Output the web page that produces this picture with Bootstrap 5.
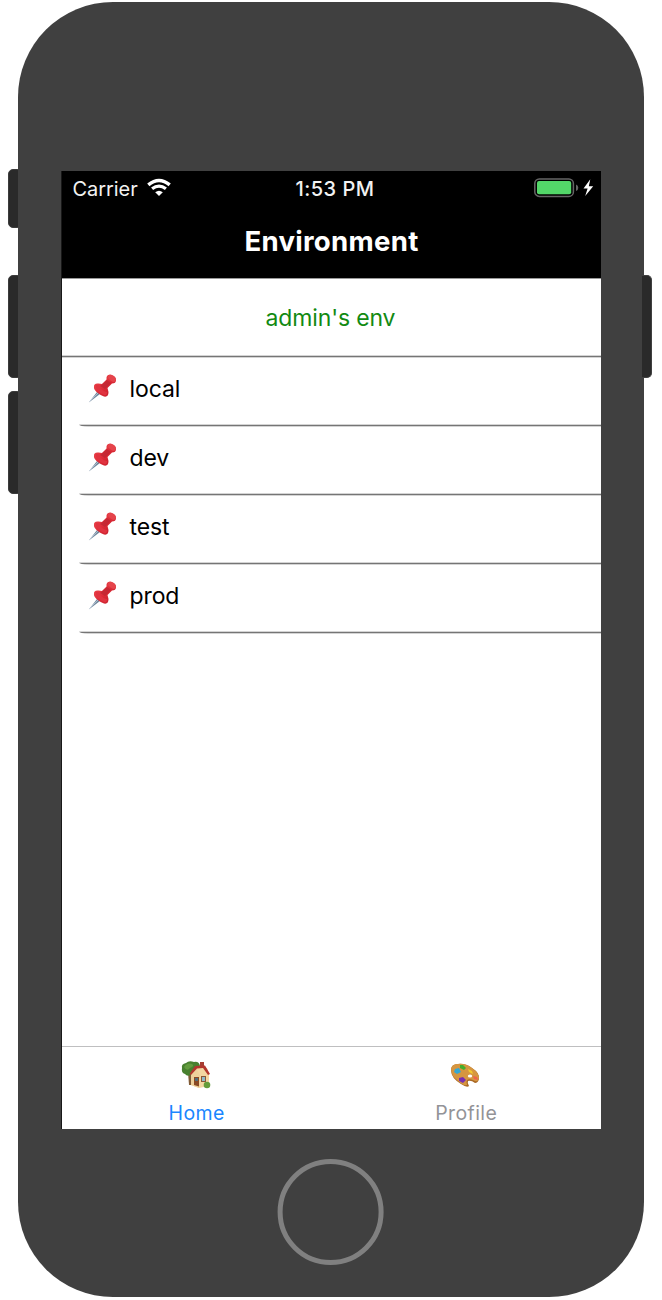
<!DOCTYPE html>
<html lang="en">
<head>
<meta charset="utf-8">
<meta name="viewport" content="width=device-width, initial-scale=1">
<title>Environment</title>
<link href="https://cdn.jsdelivr.net/npm/bootstrap@5.3.0/dist/css/bootstrap.min.css" rel="stylesheet">
<style>
html,body{height:1300px;overflow:hidden;background:#fff}
body{font-family:Inter,"Liberation Sans",sans-serif;color:#000}
.phone{width:626.4px;height:1295px;margin:2.4px 0 0 17.7px;border-radius:95px;background:#404040;padding:168.6px 43px 0 43.3px}
.side-key{width:14px;background:#2a2a2a;border:1.5px solid #3c3c3c;border-radius:5px}
.k1{left:7.5px;top:169px;height:59px}
.k2{left:7.5px;top:275px;height:103px}
.k3{left:7.5px;top:391px;height:103px}
.key-edge{width:10px;left:642px;top:275px;height:103px;background:#2a2a2a;border:1.5px solid #404040;border-left:0;border-radius:0 5px 5px 0}
.screen{width:540px;height:958px;border-left:1px solid #181818}
.top{height:108px;border-bottom:1px solid #999}
.status{height:36px;font-size:20px;line-height:36px;color:#f2f2f2}
.status>div{flex:1 1 0}
.carrier{letter-spacing:-.05px;margin-left:2.5px}
.wifi{margin:0 0 1px 8.5px}
.battery{margin:0 5px 1px 0}
.clock{font-weight:500;letter-spacing:.5px;margin-left:-1px}
.heading{font-size:27.6px;line-height:34px;font-weight:700;margin-top:17px;letter-spacing:.28px}
.ruled{background:linear-gradient(#d4d4d4 1px,#757575 1px 2px,#d4d4d4 2px) bottom/100% 3px no-repeat}
.owner{height:79px;font-size:23px;line-height:79px;color:#128a12;letter-spacing:-.15px;padding-right:2px}
.env{height:69px;margin-left:17px;padding:0 0 6px 9px;border-bottom-left-radius:9px 3px;font-size:23px;line-height:64px}
.env svg{margin:0 12.5px 1px 0}
.env span{letter-spacing:-.1px;margin-top:-1px}
.tabs{height:83px;border-top:1px solid #bfbfc0}
.tab{flex:1 1 0;font-size:19.5px;line-height:24px;letter-spacing:.4px;color:#939397;padding-top:13px}
.tab.on{color:#1a86ff}
.tab span{margin-top:11px}
.tab svg{margin-left:-2px}
.home-key{width:106px;height:106px;border:5px solid #808080;border-radius:50%;margin:30px auto 0;transform:translateX(-.4px)}
</style>
</head>
<body>
<div class="position-absolute side-key k1"></div>
<div class="position-absolute side-key k2"></div>
<div class="position-absolute side-key k3"></div>
<div class="phone position-relative">
 <div class="screen bg-white d-flex flex-column">
  <header class="top bg-black text-white text-center">
   <div class="status d-flex">
    <div class="d-flex align-items-center ps-2 text-start"><span class="carrier">Carrier</span>
     <svg class="wifi" width="26" height="20" viewBox="0 0 26 20" fill="none" stroke="#fff"><path d="M2.300 6.900Q13-1.800 23.700 6.900" stroke-width="3.500"/><path d="M6.100 10.800Q13 5.400 19.900 10.800" stroke-width="3.300"/><path d="M9.200 14.200Q13 11.200 16.800 14.200L13 18Z" fill="#fff" stroke="none"/></svg>
    </div>
    <div class="clock">1:53 PM</div>
    <div class="d-flex align-items-center justify-content-end">
     <svg class="battery" width="62" height="22" viewBox="0 0 62 22"><rect x=".8" y="2" width="38.6" height="17.4" rx="4.5" fill="none" stroke="#656565" stroke-width="1.5"/><rect x="3" y="4.1" width="34.2" height="13.1" rx="2" fill="#53d769"/><path d="M42 7.500Q44.300 8.200 44.300 10.700Q44.300 13.200 42 14Z" fill="#656565"/><path d="M56.300 2.200L49.500 11.600H53.600L51.200 19L59.200 9.200H54.800Z" fill="#fff"/></svg>
    </div>
   </div>
   <h1 class="heading mb-0">Environment</h1>
  </header>
  <main class="flex-grow-1">
   <div class="owner ruled text-center">admin's env</div>
   <div class="env ruled d-flex align-items-center"><svg width="29" height="29"><use href="#pin"/></svg><span>local</span></div>
   <div class="env ruled d-flex align-items-center"><svg width="29" height="29"><use href="#pin"/></svg><span>dev</span></div>
   <div class="env ruled d-flex align-items-center"><svg width="29" height="29"><use href="#pin"/></svg><span>test</span></div>
   <div class="env ruled d-flex align-items-center"><svg width="29" height="29"><use href="#pin"/></svg><span>prod</span></div>
  </main>
  <nav class="tabs d-flex">
   <div class="tab on d-flex flex-column align-items-center">
    <svg width="30" height="30" viewBox="0 0 30 30"><path d="M7 12L10 11L11 25H8Z" fill="#805a35"/><path d="M1 8Q0 4 5 3Q8 0 13 2Q18 1 19 6L18 11L10 15Q6 17 4 14Q0 13 1 8Z" fill="#48802f"/><path d="M3 7Q6 2 11 4Q14 6 9 8Q6 12 3 7" fill="#629b3d"/><path d="M10 14L15 7L26 8L28 15V26L18 28L10 25Z" fill="#f3d7a1"/><path d="M10 15L15 8L19 15L18 28L10 25Z" fill="#eed09a"/><path d="M19 2H23V8H19Z" fill="#a63e32"/><path d="M8.500 14L14 6L24 5.500L29 14L27 15L22 8L16 8.500L10 15Z" fill="#b2362d"/><path d="M13 17H18V26.500L13 25Z" fill="#8a4a24"/><path d="M14 18H17V21H14Z" fill="#536d78"/><path d="M20 16H25V22H20Z" fill="#8b5738"/><path d="M21 17H24V21H21Z" fill="#8dbac9"/><circle cx="26" cy="25" r="3.300" fill="#659c3b"/></svg>
    <span>Home</span>
   </div>
   <div class="tab d-flex flex-column align-items-center">
    <svg width="30" height="30" viewBox="0 0 30 30"><path d="M1 10Q1 4 8 4Q15 3 22 8Q30 13 29 19Q28 23 25 23Q21 20 18 21Q17 23 19 26Q17 28 11 24Q1 18 1 10Z" fill="#aa6926"/><path d="M1 9Q2 4 8 4Q15 3 22 8Q29 13 29 18Q28 22 25 21Q20 18 17 20Q16 22 17 25Q13 26 8 21Q1 16 1 9Z" fill="#d69640"/><ellipse cx="20" cy="16" rx="2.200" ry="1.600" fill="#fff"/><path d="M10 5L13 5L16 8L14 10L10 8Z" fill="#43ad2b"/><path d="M5 9L9 8L11 12L7 14L4 12Z" fill="#35a8d3"/><path d="M9 18L13 17L16 20L13 23L9 21Z" fill="#7830b1"/><path d="M18 9L22 11L23 14L19 12Z" fill="#f3cb2d"/><path d="M23 16L27 17L28 20L24 19Z" fill="#ee614d"/></svg>
    <span>Profile</span>
   </div>
  </nav>
 </div>
 <div class="home-key"></div>
</div>
<div class="position-absolute key-edge"></div>
<svg width="0" height="0" class="position-absolute"><defs>
 <linearGradient id="red" x1="0" y1="0" x2="1" y2="1"><stop stop-color="#f45256"/><stop offset=".55" stop-color="#dc2935"/><stop offset="1" stop-color="#ba1e2b"/></linearGradient>
 <g id="pin"><path d="M.8 28.5L11 15.5L14 18.5Z" fill="#71879c"/><path d="M1.6 27.5L12 17" stroke="#bccbda" stroke-width=".8"/><path d="M6 13Q5.500 9 10.500 9.500L14 10L18.500 5.500Q18 0 23 1Q28 2 28 6Q28 9.500 24 9.500L19.500 14L20.500 18Q20.500 23.500 16 22.500Q12 21 8.500 18Q5.500 15 6 13Z" fill="url(#red)"/><path d="M12 12L19 6L23 9L17 15Z" fill="#bd2532" opacity=".75"/><path d="M7.500 11Q11 10 12 14Q16 18 19 18Q19 22 16 21Q8 18 7.500 11Z" fill="#e03340"/><ellipse cx="24" cy="4.200" rx="4.400" ry="2.800" transform="rotate(40 24 4.200)" fill="#e5444b"/></g>
</defs></svg>
<script src="https://cdn.jsdelivr.net/npm/bootstrap@5.3.0/dist/js/bootstrap.bundle.min.js"></script>
</body>
</html>
